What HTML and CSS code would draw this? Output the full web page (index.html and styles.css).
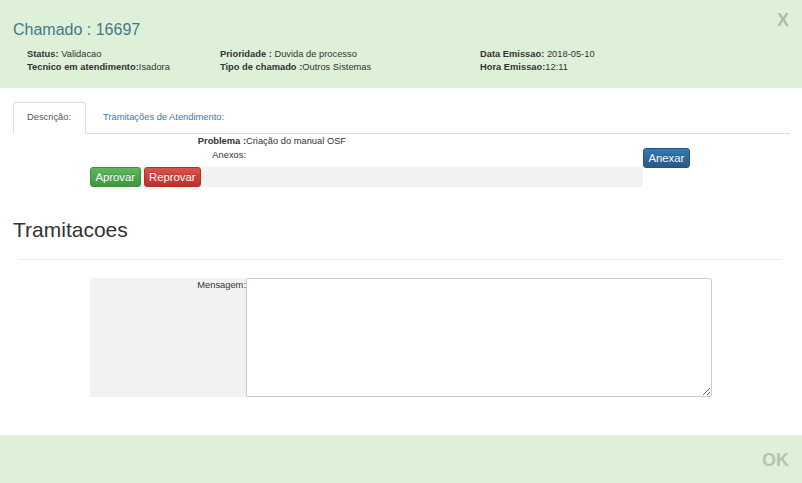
FILE: index.html
```html
<!DOCTYPE html>
<html lang="pt">
<head>
<meta charset="utf-8">
<title>Chamado : 16697</title>
<link rel="stylesheet" href="styles.css">
</head>
<body>
<div class="modal">
  <header class="modal-header">
    <div class="title-row">
      <h4 class="title">Chamado : 16697</h4>
      <button class="close" type="button">X</button>
    </div>
    <div class="info">
      <div><b>Status:</b> Validacao</div>
      <div><b>Prioridade :</b> Duvida de processo</div>
      <div><b>Data Emissao:</b> 2018-05-10</div>
      <div><b>Tecnico em atendimento:</b>Isadora</div>
      <div><b>Tipo de chamado :</b>Outros Sistemas</div>
      <div><b>Hora Emissao:</b>12:11</div>
    </div>
  </header>
  <main class="modal-body">
    <ul class="tabs">
      <li class="tab active"><a>Descrição:</a></li>
      <li class="tab"><a>Tramitações de Atendimento:</a></li>
    </ul>
    <div class="desc">
      <div class="desc-main">
        <div class="field"><span class="label label-strong">Problema :</span><span>Criação do manual OSF</span></div>
        <div class="field"><span class="label">Anexos:</span><span></span></div>
        <div class="actions">
          <button class="btn btn-success" type="button">Aprovar</button>
          <button class="btn btn-danger" type="button">Reprovar</button>
        </div>
      </div>
      <div class="desc-side">
        <button class="btn btn-primary" type="button">Anexar</button>
      </div>
    </div>
    <h2 class="section-title">Tramitacoes</h2>
    <hr class="sep">
    <div class="msg-form">
      <label class="msg-label" for="msg">Mensagem:</label>
      <textarea class="msg-input" id="msg"></textarea>
    </div>
  </main>
  <footer class="modal-footer">
    <button class="ok" type="button">OK</button>
  </footer>
</div>
</body>
</html>
```

FILE: styles.css
```css
* { box-sizing: border-box; }
html, body { margin: 0; height: 100%; }
body {
  font-family: "Liberation Sans", Arial, sans-serif;
  font-size: 9.33px;
  line-height: 13.33px;
  color: #333;
  background: #fff;
}
.modal { display: flex; flex-direction: column; height: 100vh; }

.modal-header {
  flex: none;
  height: 88px;
  background: #dff0d8;
  padding: 11px 13px 0 13px;
}
.title-row { display: flex; justify-content: space-between; align-items: flex-start; }
.title {
  margin: 9px 0 0;
  font-size: 16px;
  line-height: 20px;
  font-weight: normal;
  color: #45788b;
}
.close {
  border: 0;
  background: none;
  padding: 0;
  font: bold 18px/18px "Liberation Sans", Arial, sans-serif;
  color: #aebdaa;
  cursor: pointer;
}
.info {
  display: grid;
  grid-template-columns: 193px 260px 1fr;
  margin-top: 7.6px;
  padding-left: 14px;
}
.info b { font-weight: bold; }

.modal-body {
  flex: 1;
  padding: 14px 12px 0 13px;
}
.tabs {
  list-style: none;
  margin: 0;
  padding: 0;
  display: flex;
  border-bottom: 1px solid #ddd;
}
.tab {
  margin: 0 3px -1px 0;
  border: 1px solid transparent;
  border-radius: 3px 3px 0 0;
}
.tab a {
  display: block;
  padding: 8px 13px 9px;
  color: #337ab7;
}
.tab.active { border-color: #ddd #ddd transparent; background: #fff; }
.tab.active a { color: #555; padding-right: 14px; }

.desc { display: flex; margin-left: 77px; padding-top: 1px; }
.desc-main { width: 553px; }
.field { display: grid; grid-template-columns: 156px 1fr; }
.label { text-align: right; }
.label-strong { font-weight: bold; }
.actions {
  margin-top: 5px;
  height: 20px;
  background: #f2f2f2;
  display: flex;
  gap: 3px;
}
.desc-side { padding-top: 12.5px; }

.btn {
  font: 11.3px/14px "Liberation Sans", Arial, sans-serif;
  padding: 2px 4.5px;
  border: 1px solid;
  border-radius: 3px;
  color: #fff;
  text-shadow: 0 -1px 0 rgba(0,0,0,.2);
  cursor: pointer;
}
.btn-success { background: linear-gradient(#5cb85c, #419641); border-color: #3e8f3e; }
.btn-danger { background: linear-gradient(#d9534f, #c12e2a); border-color: #b92c28; }
.btn-primary { background: linear-gradient(#337ab7, #265a88); border-color: #245580; }

.section-title {
  margin: 31.5px 0 0;
  font-size: 21px;
  line-height: 23.1px;
  font-weight: normal;
  color: #333;
}
.sep {
  border: 0;
  border-top: 1px solid #eee;
  height: 0;
  margin: 17.4px 8px 0 5px;
}
.msg-form {
  display: flex;
  margin: 18px 0 0 77px;
  height: 119px;
}
.msg-label {
  width: 156px;
  background: #f2f2f2;
  text-align: right;
  padding-top: 1px;
}
.msg-input {
  width: 466px;
  height: 119px;
  margin: 0;
  border: 1px solid #ccc;
  border-radius: 2px;
  font: inherit;
}

.modal-footer {
  flex: none;
  height: 48px;
  background: #dff0d8;
  border-top: 1px solid #e9f0e6;
  padding: 15px 13px 0;
  text-align: right;
}
.ok {
  border: 0;
  background: none;
  padding: 0;
  font: bold 18px/18px "Liberation Sans", Arial, sans-serif;
  color: #b3c5ae;
  cursor: pointer;
}
```
